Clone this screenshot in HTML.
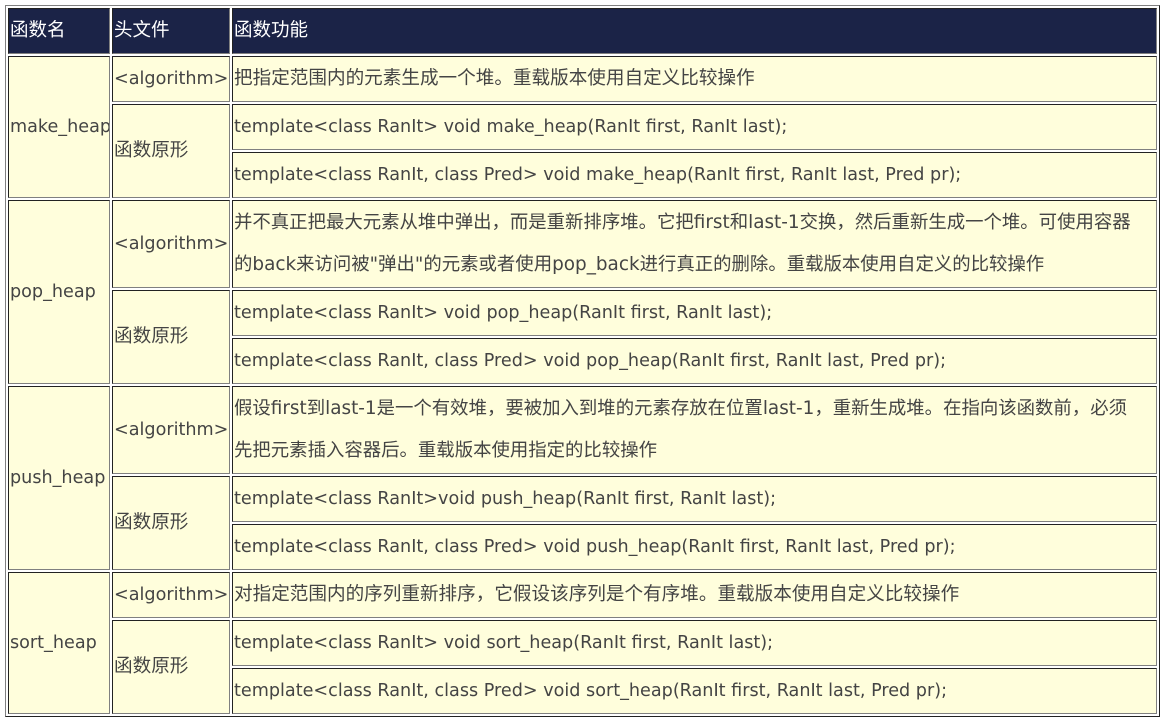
<!DOCTYPE html>
<html><head><meta charset="utf-8"><style>
html,body{margin:0;padding:0;background:#fff;}
table{position:absolute;left:5px;top:5px;width:1155px;table-layout:fixed;border-collapse:separate;border-spacing:2px;border:1px solid;border-color:#808080 #222 #222 #808080;font-family:"DejaVu Sans","Noto Sans CJK SC",sans-serif;font-size:17.6px;color:#444;}
td,th{border:1px solid;border-color:#222 #808080 #808080 #222;background:#fffedc;padding:0 0 0 1px;font-weight:normal;text-align:left;line-height:44px;height:44px;white-space:nowrap;overflow:hidden;}
th{background:#1b2347;color:#fff;font-size:18.5px}
td.two{line-height:42px;height:86px;font-size:18.4px}
.c{font-size:18.6px}
</style></head><body>
<table>
<colgroup><col style="width:102px"><col style="width:118px"><col></colgroup>
<tr><th>函数名</th><th>头文件</th><th>函数功能</th></tr>
<tr><td rowspan="3">make_heap</td><td>&lt;algorithm&gt;</td><td class="c">把指定范围内的元素生成一个堆。重载版本使用自定义比较操作</td></tr>
<tr><td rowspan="2" class="c">函数原形</td><td>template&lt;class RanIt&gt; void make_heap(RanIt first, RanIt last);</td></tr>
<tr><td>template&lt;class RanIt, class Pred&gt; void make_heap(RanIt first, RanIt last, Pred pr);</td></tr>
<tr><td rowspan="3">pop_heap</td><td>&lt;algorithm&gt;</td><td class="two">并不真正把最大元素从堆中弹出，而是重新排序堆。它把first和last-1交换，然后重新生成一个堆。可使用容器<br>的back来访问被"弹出"的元素或者使用pop_back进行真正的删除。重载版本使用自定义的比较操作</td></tr>
<tr><td rowspan="2" class="c">函数原形</td><td>template&lt;class RanIt&gt; void pop_heap(RanIt first, RanIt last);</td></tr>
<tr><td>template&lt;class RanIt, class Pred&gt; void pop_heap(RanIt first, RanIt last, Pred pr);</td></tr>
<tr><td rowspan="3">push_heap</td><td>&lt;algorithm&gt;</td><td class="two">假设first到last-1是一个有效堆，要被加入到堆的元素存放在位置last-1，重新生成堆。在指向该函数前，必须<br>先把元素插入容器后。重载版本使用指定的比较操作</td></tr>
<tr><td rowspan="2" class="c">函数原形</td><td>template&lt;class RanIt&gt;void push_heap(RanIt first, RanIt last);</td></tr>
<tr><td>template&lt;class RanIt, class Pred&gt; void push_heap(RanIt first, RanIt last, Pred pr);</td></tr>
<tr><td rowspan="3">sort_heap</td><td>&lt;algorithm&gt;</td><td class="c">对指定范围内的序列重新排序，它假设该序列是个有序堆。重载版本使用自定义比较操作</td></tr>
<tr><td rowspan="2" class="c">函数原形</td><td>template&lt;class RanIt&gt; void sort_heap(RanIt first, RanIt last);</td></tr>
<tr><td>template&lt;class RanIt, class Pred&gt; void sort_heap(RanIt first, RanIt last, Pred pr);</td></tr>
</table>
</body></html>
